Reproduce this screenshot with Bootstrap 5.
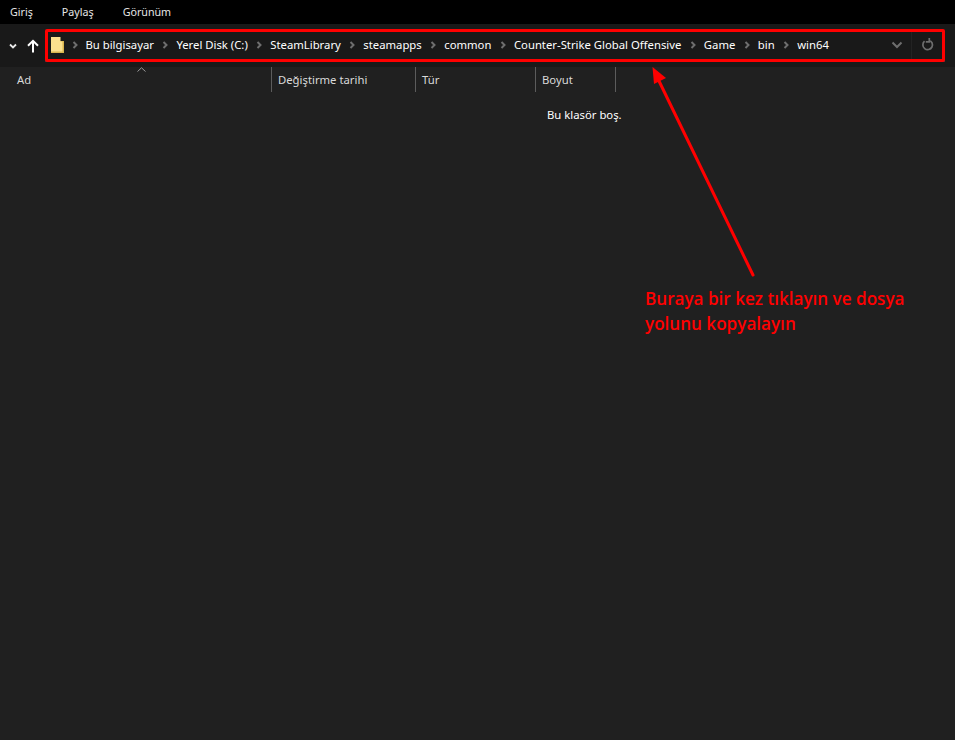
<!DOCTYPE html>
<html lang="tr">
<head>
<meta charset="utf-8">
<title>win64</title>
<link rel="stylesheet" href="https://cdn.jsdelivr.net/npm/bootstrap@5.3.0/dist/css/bootstrap.min.css">
<style>
html,body{height:100%;}
body{background:#202020;color:#fff;font-family:"Noto Sans","Open Sans",sans-serif;font-size:11.3px;line-height:16px;overflow:hidden;position:relative;}
.fx-menu{height:24px;background:#000;padding-left:10px;gap:29px;font-size:10.7px;color:#e6e6e6;}
.fx-bar{height:43px;background:#191919;padding-left:8px;}
.fx-nav{width:37px;}
.fx-path{width:900px;height:33px;margin-top:5px;background:#191919;border-bottom:2px solid #3a3a3a;padding:0 3px 0 6px;}
.fx-crumb{white-space:nowrap;}
.fx-sep{width:22.500px;flex:none;}
.fx-sep svg{display:block;margin:0 auto;}
.fx-first{width:21.500px;}
.fx-end{border-left:1px solid #232323;width:31px;height:31px;}
.fx-head{height:25px;color:#d9d9d9;}
.fx-col{height:25px;padding-left:6px;border-right:1px solid #5c5c5c;}
.fx-c1{width:272px;padding-left:17px;}
.fx-c2{width:144px;}
.fx-c3{width:120px;}
.fx-c4{width:80px;}
.fx-empty{padding:15px 0 0 547px;color:#fff;}
.fx-box{position:absolute;left:45px;top:29px;width:900px;height:33px;border:3px solid #f00;border-radius:2px;pointer-events:none;}
.fx-overlay{position:absolute;left:0;top:0;pointer-events:none;}
.fx-sort{position:absolute;left:137px;top:67px;}
.fx-note{position:absolute;left:645px;top:286px;width:290px;color:#f00;font-family:"Open Sans",sans-serif;font-size:17.1px;font-weight:600;line-height:25px;}
</style>
</head>
<body>
<div class="fx-menu d-flex align-items-center">
  <span>Giriş</span><span>Paylaş</span><span>Görünüm</span>
</div>
<div class="fx-bar d-flex align-items-start">
  <div class="fx-nav d-flex align-items-center" style="height:43px">
    <svg width="10" height="8" viewBox="0 0 10 8" class="me-2"><path d="M2 2.5 5 5.5 8 2.5" fill="none" stroke="#e8e8e8" stroke-width="1.8"/></svg>
    <svg width="14" height="14" viewBox="0 0 14 14"><path d="M7 13.5V2M2 6.8 7 1.8 12 6.8" fill="none" stroke="#fff" stroke-width="2"/></svg>
  </div>
  <div class="fx-path d-flex align-items-center">
    <svg width="13" height="16" viewBox="0 0 13 16"><path d="M0 0H9V4H13V16H0Z" fill="#d9b54e"/><path d="M0 0H9.500V4.500H11.500V14.500H0Z" fill="#fbe08d"/></svg>
    <span class="fx-sep fx-first"><svg width="6" height="8" viewBox="0 0 6 8"><path d="M1.500 1 4.500 4 1.500 7" fill="none" stroke="#6e6e6e" stroke-width="2"/></svg></span>
    <span class="fx-crumb">Bu bilgisayar</span>
    <span class="fx-sep"><svg width="6" height="8" viewBox="0 0 6 8"><path d="M1.500 1 4.500 4 1.500 7" fill="none" stroke="#6e6e6e" stroke-width="2"/></svg></span>
    <span class="fx-crumb">Yerel Disk (C:)</span>
    <span class="fx-sep"><svg width="6" height="8" viewBox="0 0 6 8"><path d="M1.500 1 4.500 4 1.500 7" fill="none" stroke="#6e6e6e" stroke-width="2"/></svg></span>
    <span class="fx-crumb">SteamLibrary</span>
    <span class="fx-sep"><svg width="6" height="8" viewBox="0 0 6 8"><path d="M1.500 1 4.500 4 1.500 7" fill="none" stroke="#6e6e6e" stroke-width="2"/></svg></span>
    <span class="fx-crumb">steamapps</span>
    <span class="fx-sep"><svg width="6" height="8" viewBox="0 0 6 8"><path d="M1.500 1 4.500 4 1.500 7" fill="none" stroke="#6e6e6e" stroke-width="2"/></svg></span>
    <span class="fx-crumb">common</span>
    <span class="fx-sep"><svg width="6" height="8" viewBox="0 0 6 8"><path d="M1.500 1 4.500 4 1.500 7" fill="none" stroke="#6e6e6e" stroke-width="2"/></svg></span>
    <span class="fx-crumb">Counter-Strike Global Offensive</span>
    <span class="fx-sep"><svg width="6" height="8" viewBox="0 0 6 8"><path d="M1.500 1 4.500 4 1.500 7" fill="none" stroke="#6e6e6e" stroke-width="2"/></svg></span>
    <span class="fx-crumb">Game</span>
    <span class="fx-sep"><svg width="6" height="8" viewBox="0 0 6 8"><path d="M1.500 1 4.500 4 1.500 7" fill="none" stroke="#6e6e6e" stroke-width="2"/></svg></span>
    <span class="fx-crumb">bin</span>
    <span class="fx-sep"><svg width="6" height="8" viewBox="0 0 6 8"><path d="M1.500 1 4.500 4 1.500 7" fill="none" stroke="#6e6e6e" stroke-width="2"/></svg></span>
    <span class="fx-crumb">win64</span>
    <span class="flex-grow-1"></span>
    <svg width="12" height="8" viewBox="0 0 12 8" class="me-2"><path d="M1.500 1.500 6 6 10.500 1.500" fill="none" stroke="#6e6e6e" stroke-width="2"/></svg>
    <span class="fx-end d-flex align-items-center justify-content-center">
      <svg width="13" height="13" viewBox="0 0 13 13"><path d="M3.500 3.200A4.800 4.800 0 1 0 8 2.200M8.300 0 8.300 3.800 4.800 3.800" fill="none" stroke="#6e6e6e" stroke-width="1.700"/></svg>
    </span>
  </div>
</div>
<div class="fx-head d-flex align-items-center">
  <div class="fx-col fx-c1 d-flex align-items-center">Ad</div>
  <div class="fx-col fx-c2 d-flex align-items-center">Değiştirme tarihi</div>
  <div class="fx-col fx-c3 d-flex align-items-center">Tür</div>
  <div class="fx-col fx-c4 d-flex align-items-center">Boyut</div>
</div>
<div class="fx-empty">Bu klasör boş.</div>

<svg class="fx-sort" width="9" height="5" viewBox="0 0 9 5"><path d="M0.500 4.500 4.500 0.800 8.500 4.500" fill="none" stroke="#9a9a9a"/></svg>
<div class="fx-box"></div>
<svg class="fx-overlay" width="955" height="740" viewBox="0 0 955 740"><path d="M753 275 659 81" stroke="#f00" stroke-width="3" stroke-linecap="round" fill="none"/><path d="M652.500 67 666 78 654 84Z" fill="#f00"/></svg>
<div class="fx-note">Buraya bir kez tıklayın ve dosya yolunu kopyalayın</div>
</body>
</html>
